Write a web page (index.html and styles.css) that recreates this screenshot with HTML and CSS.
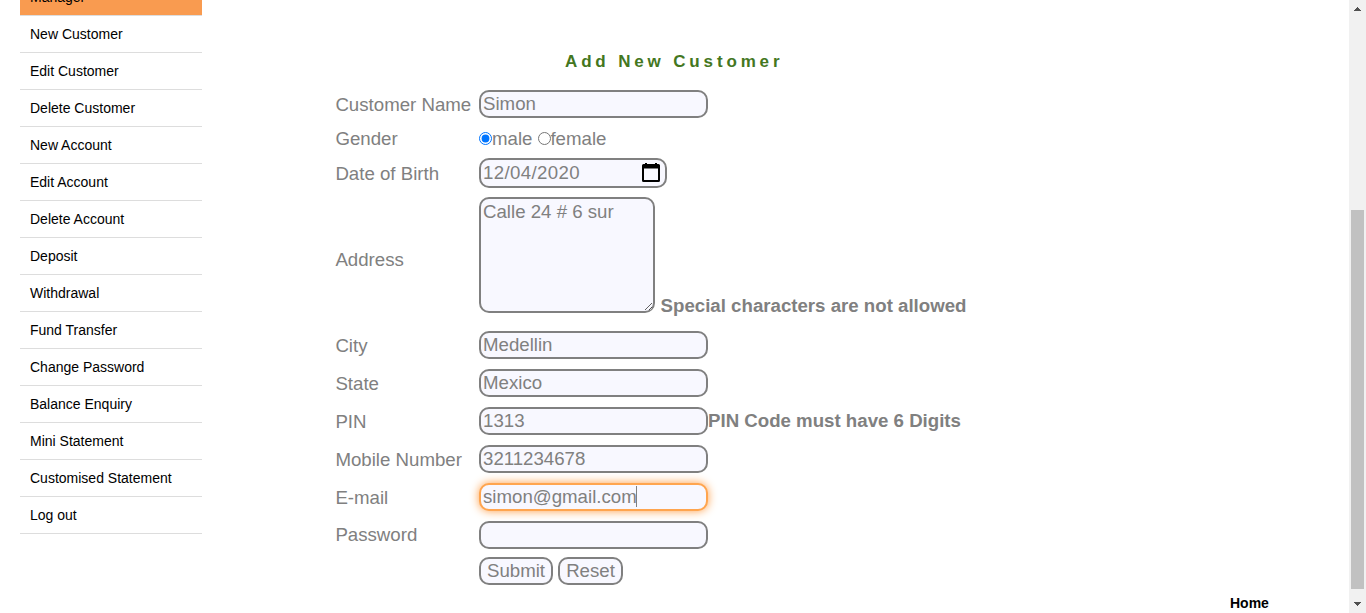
FILE: index.html
```html
<!DOCTYPE html>
<html lang="en">
<head>
<meta charset="utf-8">
<title>Add New Customer</title>
<link rel="stylesheet" href="styles.css">
</head>
<body>
<div class="page">
  <ul class="menu">
    <li class="active">Manager</li>
    <li>New Customer</li>
    <li>Edit Customer</li>
    <li>Delete Customer</li>
    <li>New Account</li>
    <li>Edit Account</li>
    <li>Delete Account</li>
    <li>Deposit</li>
    <li>Withdrawal</li>
    <li>Fund Transfer</li>
    <li>Change Password</li>
    <li>Balance Enquiry</li>
    <li>Mini Statement</li>
    <li>Customised Statement</li>
    <li>Log out</li>
  </ul>
  <main class="content">
    <h1 class="heading">Add New Customer</h1>
    <form class="form">
      <label class="label">Customer Name</label>
      <div class="cell"><input class="field" type="text" value="Simon"></div>
      <label class="label raised">Gender</label>
      <div class="cell gender"><input class="radio" type="radio" name="gender" checked><span class="male">male</span><input class="radio" type="radio" name="gender"><span class="female">female</span></div>
      <label class="label">Date of Birth</label>
      <div class="cell"><div class="field date"><span>12/04/2020</span>
        <svg width="18" height="20" viewBox="0 0 18 20"><path fill="#000" fill-rule="evenodd" d="M3 0h2v1h8V0h2v1h1.500Q18 1 18 2.500V17.500Q18 19 16.500 19H1.500Q0 19 0 17.500V2.500Q0 1 1.500 1H3zM2 5.500v11.500h14V5.500z"/></svg></div></div>
      <label class="label">Address</label>
      <div class="cell"><textarea class="field area">Calle 24 # 6 sur</textarea><span class="note address-note">Special characters are not allowed</span></div>
      <label class="label">City</label>
      <div class="cell"><input class="field" type="text" value="Medellin"></div>
      <label class="label">State</label>
      <div class="cell"><input class="field" type="text" value="Mexico"></div>
      <label class="label">PIN</label>
      <div class="cell"><input class="field" type="text" value="1313"><span class="note">PIN Code must have 6 Digits</span></div>
      <label class="label">Mobile Number</label>
      <div class="cell"><input class="field" type="text" value="3211234678"></div>
      <label class="label">E-mail</label>
      <div class="cell"><input class="field focused" type="text" value="simon@gmail.com"><i class="caret"></i></div>
      <label class="label raised">Password</label>
      <div class="cell"><input class="field" type="password"></div>
      <span></span>
      <div class="cell buttons"><button class="field submit" type="button">Submit</button><button class="field reset" type="button">Reset</button></div>
    </form>
  </main>
  <a class="home">Home</a>
  <div class="scrollbar">
    <svg width="17" height="17" shape-rendering="crispEdges"><path fill="#505050" d="M8 7h1v1h1v1h1v1h1v1H5v-1h1V9h1V8h1z"/></svg>
    <div class="thumb"></div>
    <svg width="17" height="17" shape-rendering="crispEdges"><path fill="#505050" d="M5 6h7v1h-1v1h-1v1H9v1H8V9H7V8H6V7H5z"/></svg>
  </div>
</div>
</body>
</html>
```
FILE: styles.css
```css
* { box-sizing: border-box; }
body {
  margin: 0;
  background: #fff;
  font-family: "Liberation Sans", Arial, sans-serif;
  overflow: hidden;
}
.page {
  display: grid;
  grid-template-columns: 202px 1fr 119px 17px;
  height: 613px;
  overflow: hidden;
}
.menu {
  list-style: none;
  margin: -21px 0 0 20px;
  padding: 0;
  font-size: 14px;
}
.menu li {
  height: 37px;
  padding: 0 10px;
  line-height: 36px;
  border-bottom: 1px solid #ddd;
  color: #000;
}
.menu .active { background: #f99b50; background-clip: padding-box; }
.content { padding: 52px 0 0 133px; }
.heading {
  margin: 0 0 13px 230px;
  font-size: 17px;
  line-height: 20px;
  letter-spacing: 3.85px;
  color: #44771f;
}
.form {
  display: grid;
  grid-template-columns: 144px 1fr;
  grid-template-rows: 38px 32px 36px 135px repeat(6, 38px) 34px;
  align-items: center;
  font-size: 18.67px;
  color: gray;
}
.label { padding: 2px 0 0 0.4px; }
.raised { padding-top: 0; }
.cell {
  display: flex;
  position: relative;
  align-items: center;
}
.field {
  width: 229px;
  height: 28px;
  margin: 0;
  padding: 0 2px 1px;
  font: inherit;
  color: gray;
  background: #f8f8ff;
  border: 2px solid gray;
  border-radius: 10px;
  outline: none;
}
.gender { padding-bottom: 1px; }
.radio { width: 13px; height: 13px; margin: 0; }
.male { margin-right: 6px; }
.female { margin-left: -1px; }
.date {
  display: flex;
  align-items: center;
  justify-content: space-between;
  width: 188px;
  height: 30px;
  padding: 0 5px 0 2px;
  letter-spacing: 0.35px;
}
.area {
  width: 176px;
  height: 116px;
  line-height: 21px;
  padding: 2px;
  margin-bottom: 7px;
}
.note { font-weight: bold; }
.address-note { align-self: flex-end; margin: 0 0 3px 5.600px; }
.focused {
  border-color: #ffa54f;
  box-shadow: 0 0 10px #ff9d45;
}
.caret {
  position: absolute;
  left: 157px;
  top: 3px;
  width: 1px;
  height: 21px;
  background: gray;
}
.buttons { gap: 5px; }
.submit { width: 74px; }
.reset { width: 65px; }
.home {
  align-self: end;
  margin-bottom: 1px;
  font-size: 14px;
  line-height: 18px;
  font-weight: bold;
  color: #000;
}
.scrollbar {
  display: flex;
  flex-direction: column;
  justify-content: space-between;
  background: #f1f1f1;
}
.scrollbar svg { display: block; }
.thumb {
  width: 13px;
  height: 379px;
  margin: 186px 0 0 2px;
  background: #c1c1c1;
}
```
